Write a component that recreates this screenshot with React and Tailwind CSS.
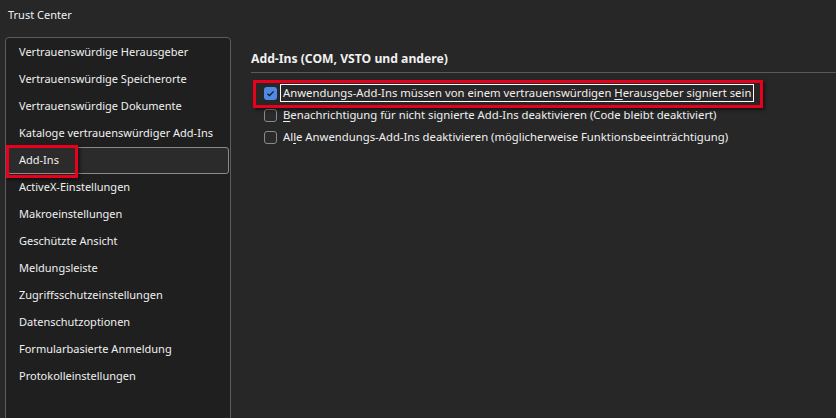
import React from 'react';

const items = [
  'Vertrauenswürdige Herausgeber',
  'Vertrauenswürdige Speicherorte',
  'Vertrauenswürdige Dokumente',
  'Kataloge vertrauenswürdiger Add-Ins',
  'Add-Ins',
  'ActiveX-Einstellungen',
  'Makroeinstellungen',
  'Geschützte Ansicht',
  'Meldungsleiste',
  'Zugriffsschutzeinstellungen',
  'Datenschutzoptionen',
  'Formularbasierte Anmeldung',
  'Protokolleinstellungen',
];

const Check = ({ checked }) =>
  checked ? (
    <span className="w-[13px] h-[13px] rounded-[3px] bg-[#4f8ae6] flex items-center justify-center shrink-0">
      <svg width="9" height="9" viewBox="0 0 9 9">
        <path d="M1.5 4.8 L3.5 6.6 L7.6 2.3" fill="none" stroke="#111" strokeWidth="1.2" />
      </svg>
    </span>
  ) : (
    <span className="w-[13px] h-[13px] rounded-[3px] border border-[#8a8a8a] bg-[#2a2a2a] shrink-0" />
  );

const App = () => {
  return (
    <div
      className="w-[836px] h-[418px] bg-[#272727] text-[#f0f0f0] overflow-hidden relative whitespace-nowrap"
      style={{ fontFamily: '"Noto Sans", "Open Sans", sans-serif' }}
    >
      <div className="h-[37px] pl-[8px] pt-[7px] text-[11px]">Trust Center</div>

      <div className="flex">
        {/* Navigation */}
        <div className="ml-[5px] w-[226px] h-[400px] bg-[#1f1f1f] border border-[#5c5c5c] rounded-t-[4px] pt-[1px] shrink-0">
          {items.map((it) => (
            <div
              key={it}
              className={
                it === 'Add-Ins'
                  ? 'mx-[1px] h-[27px] flex items-center pl-[11px] text-[11px] border border-[#8a8a8a] rounded-[3px] bg-[#2b2b2b]'
                  : 'mx-[1px] h-[27px] flex items-center pl-[12px] text-[11px]'
              }
            >
              {it}
            </div>
          ))}
        </div>

        {/* Content */}
        <div className="flex-1 pl-[20px] pt-[12px]">
          <div className="text-[12.2px] font-bold h-[20px] flex items-center">Add-Ins (COM, VSTO und andere)</div>
          <div className="h-px bg-[#5a5a5a] mt-[3px] mb-[9px]" />
          <div className="pl-[13px] flex flex-col text-[11.3px]">
            <label className="flex items-center gap-[3px] h-[22px]">
              <Check checked />
              <span className="block border border-white px-[2px] h-[18px] leading-[16px]">
                Anwendungs-Add-Ins müssen von einem vertrauenswürdigen{' '}
                <u className="underline-offset-2">H</u>erausgeber signiert sein
              </span>
            </label>
            <label className="flex items-center gap-[6px] h-[22px]">
              <Check />
              <span>
                <u className="underline-offset-2">B</u>enachrichtigung für nicht signierte Add-Ins deaktivieren (Code bleibt deaktiviert)
              </span>
            </label>
            <label className="flex items-center gap-[6px] h-[22px]">
              <Check />
              <span>
                Al<u className="underline-offset-2">l</u>e Anwendungs-Add-Ins deaktivieren (möglicherweise Funktionsbeeinträchtigung)
              </span>
            </label>
          </div>
        </div>
      </div>

      {/* Annotation boxes */}
      <div className="absolute left-[6px] top-[145px] w-[72px] h-[33px] border-[3px] border-[#e8001c] shadow-[2px_2px_3px_rgba(0,0,0,0.5)]" />
      <div className="absolute left-[253px] top-[80px] w-[510px] h-[28px] border-[3px] border-[#e8001c] shadow-[2px_2px_3px_rgba(0,0,0,0.5)]" />
    </div>
  );
};

export default App;
